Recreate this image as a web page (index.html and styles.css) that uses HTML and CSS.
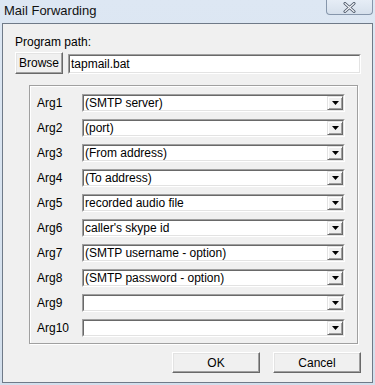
FILE: index.html
```html
<!DOCTYPE html>
<html lang="en">
<head>
  <meta charset="UTF-8"/>
  <title>Mail Forwarding</title>
  <link rel="stylesheet" href="styles.css">
</head>
<body>

  <div class="window">
    <!-- TITLE BAR -->
    <div class="titlebar">
      <span class="title">Mail Forwarding</span>
      <div class="close">
        <svg width="13" height="11" viewBox="0 0 13 11">
          <path d="M2 1.5 L11 9.5 M11 1.5 L2 9.5" stroke="#4a5566" stroke-width="3" stroke-linecap="round"/>
          <path d="M2 1.5 L11 9.5 M11 1.5 L2 9.5" stroke="#f4f7fb" stroke-width="1.2" stroke-linecap="round"/>
        </svg>
      </div>
    </div>

    <!-- CLIENT -->
    <div class="client">
      <div class="path-label">Program path:</div>
      <div class="path-row">
        <button class="btn btn-browse">Browse</button>
        <div class="field"><div class="field-inner">tapmail.bat</div></div>
      </div>

      <div class="group">
        <div class="arg-row"><span class="arg-label">Arg1</span><div class="combo"><div class="combo-inner"><span class="combo-text">(SMTP server)</span><span class="combo-btn"><svg width="7" height="4" viewBox="0 0 7 4"><path d="M0 0H7L3.5 4Z" fill="#000"/></svg></span></div></div></div>
        <div class="arg-row"><span class="arg-label">Arg2</span><div class="combo"><div class="combo-inner"><span class="combo-text">(port)</span><span class="combo-btn"><svg width="7" height="4" viewBox="0 0 7 4"><path d="M0 0H7L3.5 4Z" fill="#000"/></svg></span></div></div></div>
        <div class="arg-row"><span class="arg-label">Arg3</span><div class="combo"><div class="combo-inner"><span class="combo-text">(From address)</span><span class="combo-btn"><svg width="7" height="4" viewBox="0 0 7 4"><path d="M0 0H7L3.5 4Z" fill="#000"/></svg></span></div></div></div>
        <div class="arg-row"><span class="arg-label">Arg4</span><div class="combo"><div class="combo-inner"><span class="combo-text">(To address)</span><span class="combo-btn"><svg width="7" height="4" viewBox="0 0 7 4"><path d="M0 0H7L3.5 4Z" fill="#000"/></svg></span></div></div></div>
        <div class="arg-row"><span class="arg-label">Arg5</span><div class="combo"><div class="combo-inner"><span class="combo-text">recorded audio file</span><span class="combo-btn"><svg width="7" height="4" viewBox="0 0 7 4"><path d="M0 0H7L3.5 4Z" fill="#000"/></svg></span></div></div></div>
        <div class="arg-row"><span class="arg-label">Arg6</span><div class="combo"><div class="combo-inner"><span class="combo-text">caller's skype id</span><span class="combo-btn"><svg width="7" height="4" viewBox="0 0 7 4"><path d="M0 0H7L3.5 4Z" fill="#000"/></svg></span></div></div></div>
        <div class="arg-row"><span class="arg-label">Arg7</span><div class="combo"><div class="combo-inner"><span class="combo-text">(SMTP username - option)</span><span class="combo-btn"><svg width="7" height="4" viewBox="0 0 7 4"><path d="M0 0H7L3.5 4Z" fill="#000"/></svg></span></div></div></div>
        <div class="arg-row"><span class="arg-label">Arg8</span><div class="combo"><div class="combo-inner"><span class="combo-text">(SMTP password - option)</span><span class="combo-btn"><svg width="7" height="4" viewBox="0 0 7 4"><path d="M0 0H7L3.5 4Z" fill="#000"/></svg></span></div></div></div>
        <div class="arg-row"><span class="arg-label">Arg9</span><div class="combo"><div class="combo-inner"><span class="combo-text"></span><span class="combo-btn"><svg width="7" height="4" viewBox="0 0 7 4"><path d="M0 0H7L3.5 4Z" fill="#000"/></svg></span></div></div></div>
        <div class="arg-row"><span class="arg-label">Arg10</span><div class="combo"><div class="combo-inner"><span class="combo-text"></span><span class="combo-btn"><svg width="7" height="4" viewBox="0 0 7 4"><path d="M0 0H7L3.5 4Z" fill="#000"/></svg></span></div></div></div>
      </div>

      <div class="actions">
        <button class="btn btn-dialog">OK</button>
        <button class="btn btn-dialog">Cancel</button>
      </div>
    </div>
  </div>

</body>
</html>
```

FILE: styles.css
```css
* {
  margin: 0;
  padding: 0;
  box-sizing: border-box;
}

body {
  font-family: 'Liberation Sans', Arial, sans-serif;
  font-size: 12px;
  color: #000;
  background: #dae4f0;
}

.window {
  width: 375px;
  height: 385px;
  display: flex;
  flex-direction: column;
  background: linear-gradient(#dde7f3, #d3dfec);
}

/* title bar */
.titlebar {
  height: 23px;
  display: flex;
  align-items: flex-start;
}

.title {
  padding-left: 4px;
  font-size: 13px;
  line-height: 21px;
  color: #111;
}

.close {
  margin-left: auto;
  margin-right: 2px;
  width: 47px;
  height: 15px;
  border: 1px solid #8696ab;
  border-top: none;
  border-radius: 0 0 4px 4px;
  background: linear-gradient(#e6edf6, #d6e0ec);
  display: flex;
  align-items: center;
  justify-content: center;
}

/* client area */
.client {
  flex: 1;
  margin: 0 2px 2px 2px;
  border: 1px solid #6f7a88;
  background: #f0f0f0;
  padding: 11px 11px 0 12px;
}

.path-label {
  line-height: 14px;
}

.path-row {
  margin-top: 3px;
  display: flex;
  align-items: flex-end;
  gap: 5px;
}

.btn {
  font-family: 'Liberation Sans', Arial, sans-serif;
  font-size: 12px;
  color: #000;
  background: #f0f0f0;
  border: 1px solid;
  border-color: #fff #696969 #696969 #fff;
  box-shadow: inset -1px -1px 0 #a0a0a0, inset 1px 1px 0 #e3e3e3;
}

.btn-browse {
  width: 48px;
  height: 22px;
}

.field {
  flex: 1;
  height: 20px;
  border: 1px solid;
  border-color: #a0a0a0 #fff #fff #a0a0a0;
}

.field-inner {
  height: 100%;
  background: #fff;
  border: 1px solid;
  border-color: #696969 #e3e3e3 #e3e3e3 #696969;
  padding-left: 1px;
  line-height: 16px;
}

/* group */
.group {
  margin: 11px 3px 0 14px;
  border: 1px solid #a0a0a0;
  box-shadow: inset 1px 1px 0 #fff, 1px 1px 0 #fff;
  padding: 8px 12px 6px 7px;
  display: grid;
  gap: 7px;
}

.arg-row {
  display: flex;
  align-items: center;
  height: 18px;
}

.arg-label {
  width: 45px;
  flex-shrink: 0;
}

.combo {
  flex: 1;
  height: 18px;
  border: 1px solid;
  border-color: #a0a0a0 #fff #fff #a0a0a0;
}

.combo-inner {
  height: 100%;
  background: #fff;
  border: 1px solid;
  border-color: #696969 #e3e3e3 #e3e3e3 #696969;
  display: flex;
  align-items: center;
}

.combo-text {
  flex: 1;
  padding-left: 1px;
  line-height: 14px;
  white-space: nowrap;
}

.combo-btn {
  width: 16px;
  height: 14px;
  background: #f0f0f0;
  border: 1px solid;
  border-color: #e3e3e3 #696969 #696969 #e3e3e3;
  box-shadow: inset 1px 1px 0 #fff, inset -1px -1px 0 #a0a0a0;
  display: flex;
  align-items: center;
  justify-content: center;
}

.combo-btn svg {
  display: block;
}

/* buttons */
.actions {
  margin-top: 8px;
  display: flex;
  justify-content: flex-end;
  gap: 13px;
}

.btn-dialog {
  width: 88px;
  height: 21px;
}
```
